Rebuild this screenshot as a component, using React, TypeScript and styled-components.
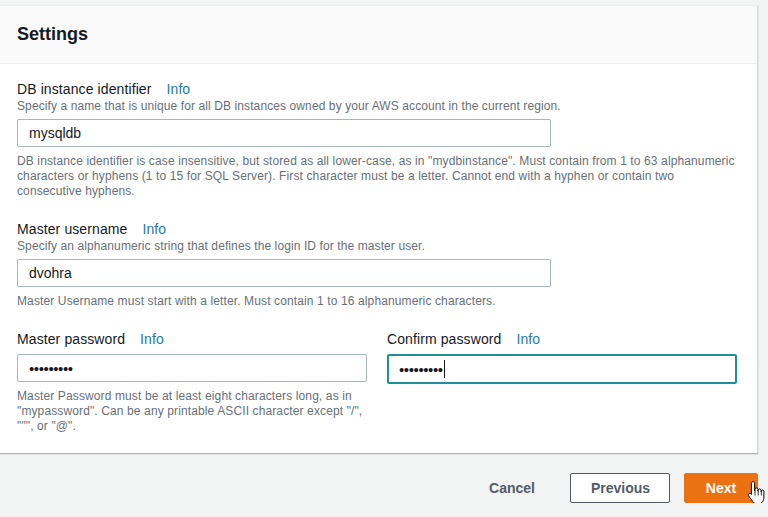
import React from 'react';
import styled, { createGlobalStyle } from 'styled-components';

const GlobalStyle = createGlobalStyle`
  html, body {
    margin: 0;
    padding: 0;
    background: #f2f3f3;
    font-family: "Liberation Sans", Arial, sans-serif;
    color: #16191f;
  }
  * { box-sizing: border-box; }
`;

const Page = styled.div`
  padding: 5px 10px 0 0;
`;

const Panel = styled.section`
  background: #fff;
  border-top: 1px solid #eaeded;
  border-right: 1px solid #d5dbdb;
  box-shadow: 0 1px 1px 0 rgba(0, 28, 36, 0.3);
`;

const PanelHeader = styled.div`
  height: 58px;
  display: flex;
  align-items: center;
  padding: 0 17px;
  background: #fafafa;
  border-bottom: 1px solid #eaeded;
`;

const Title = styled.h2`
  margin: 0;
  font-size: 18px;
  font-weight: 700;
  color: #16191f;
`;

const PanelBody = styled.div`
  padding: 16px 20px 19px 17px;
  display: flex;
  flex-direction: column;
  gap: 21px;
`;

const Field = styled.div`
  display: flex;
  flex-direction: column;
`;

const Label = styled.label`
  font-size: 14px;
  line-height: 18px;
  letter-spacing: 0.1px;
  color: #16191f;
`;

const InfoLink = styled.a`
  margin-left: 15px;
  color: #2779a7;
  text-decoration: none;
`;

const Description = styled.div`
  font-size: 12px;
  line-height: 16px;
  letter-spacing: 0.1px;
  color: #687078;

  & + div {
    margin-top: 5px;
  }
`;

const TextBox = styled.div<{ $focused?: boolean; $wide?: boolean }>`
  margin-top: 6px;
  height: ${(p) => (p.$focused ? '30px' : '28px')};
  max-width: ${(p) => (p.$wide ? 'none' : '534px')};
  display: flex;
  align-items: center;
  padding: 0 ${(p) => (p.$focused ? '10px' : '11px')};
  border: ${(p) => (p.$focused ? '2px solid #1f8f9e' : '1px solid #aab7b8')};
  border-radius: 2px;
  font-size: 14px;
  color: #16191f;
  background: #fff;
`;

const Dots = styled.span`
  font-size: 15px;
  letter-spacing: -0.4px;
`;

const Caret = styled.span`
  display: inline-block;
  width: 1px;
  height: 18px;
  background: #16191f;
  margin-left: 1px;
`;

const Constraint = styled.div`
  margin-top: 7px;
  font-size: 12px;
  line-height: 15px;
  letter-spacing: 0.12px;
  color: #687078;
`;

const Columns = styled.div`
  display: grid;
  grid-template-columns: 1fr 1fr;
  gap: 20px;
`;

const Footer = styled.div`
  display: flex;
  justify-content: flex-end;
  gap: 14px;
  padding: 20px 0 0 0;
`;

const Button = styled.button<{ $variant: 'link' | 'normal' | 'primary' }>`
  position: relative;
  height: 30px;
  padding: 0 20px;
  border-radius: 2px;
  font-family: inherit;
  font-size: 14px;
  font-weight: 700;
  cursor: pointer;
  border: 1px solid
    ${(p) => (p.$variant === 'primary' ? '#ec7211' : p.$variant === 'normal' ? '#545b64' : 'transparent')};
  background: ${(p) => (p.$variant === 'primary' ? '#ec7211' : p.$variant === 'normal' ? '#fff' : 'transparent')};
  color: ${(p) => (p.$variant === 'primary' ? '#fff' : '#545b64')};
  width: ${(p) => (p.$variant === 'normal' ? '100px' : p.$variant === 'primary' ? '74px' : 'auto')};
`;

const HandCursor = styled.svg`
  position: absolute;
  left: 62px;
  top: 6px;
  width: 18px;
  height: 27px;
`;

const Hand = () => (
  <HandCursor viewBox="0 0 18 26">
    <path
      d="M6 1.2C6.9 1.2 7.6 1.9 7.6 2.8V10.2H8V8.8C8 8 8.7 7.4 9.5 7.4C10.3 7.4 10.9 8 10.9 8.8V10.6H11.2V9.7C11.2 8.9 11.9 8.4 12.6 8.4C13.3 8.4 14 8.9 14 9.7V11.2H14.3V10.7C14.3 10 14.9 9.5 15.6 9.5C16.3 9.5 16.9 10 16.9 10.7V16.5C16.9 20 15 23.2 12.3 23.2H9.2C7.6 23.2 6.6 22.2 5.6 20.9L1.7 15.4C1.2 14.7 1.4 13.7 2.1 13.2C2.9 12.7 3.8 12.9 4.3 13.6L4.4 13.8V2.8C4.4 1.9 5.1 1.2 6 1.2Z"
      fill="#fff"
      stroke="#000"
      strokeWidth="1"
      strokeLinejoin="round"
    />
    <path d="M8 10.2V15M11.2 10.6V15M14.3 11.2V15" stroke="#000" strokeWidth="0.8" />
  </HandCursor>
);

const Info = () => <InfoLink href="#">Info</InfoLink>;

export default function App() {
  return (
    <Page>
      <GlobalStyle />
      <Panel>
        <PanelHeader>
          <Title>Settings</Title>
        </PanelHeader>
        <PanelBody>
          <Field>
            <Label>
              DB instance identifier
              <Info />
            </Label>
            <Description>
              Specify a name that is unique for all DB instances owned by your AWS account in the current region.
            </Description>
            <TextBox role="textbox">mysqldb</TextBox>
            <Constraint>
              DB instance identifier is case insensitive, but stored as all lower-case, as in "mydbinstance". Must
              contain from 1 to 63 alphanumeric characters or hyphens (1 to 15 for SQL Server). First character must be
              a letter. Cannot end with a hyphen or contain two consecutive hyphens.
            </Constraint>
          </Field>
          <Field>
            <Label>
              Master username
              <Info />
            </Label>
            <Description>Specify an alphanumeric string that defines the login ID for the master user.</Description>
            <TextBox role="textbox">dvohra</TextBox>
            <Constraint>Master Username must start with a letter. Must contain 1 to 16 alphanumeric characters.</Constraint>
          </Field>
          <Columns>
            <Field>
              <Label>
                Master password
                <Info />
              </Label>
              <TextBox role="textbox" $wide>
                <Dots>•••••••••</Dots>
              </TextBox>
              <Constraint>
                Master Password must be at least eight characters long, as in "mypassword". Can be any printable ASCII
                character except "/", """, or "@".
              </Constraint>
            </Field>
            <Field>
              <Label>
                Confirm password
                <Info />
              </Label>
              <TextBox role="textbox" $wide $focused>
                <Dots>•••••••••</Dots>
                <Caret />
              </TextBox>
            </Field>
          </Columns>
        </PanelBody>
      </Panel>
      <Footer>
        <Button $variant="link">Cancel</Button>
        <Button $variant="normal">Previous</Button>
        <Button $variant="primary">
          Next
          <Hand />
        </Button>
      </Footer>
    </Page>
  );
}
